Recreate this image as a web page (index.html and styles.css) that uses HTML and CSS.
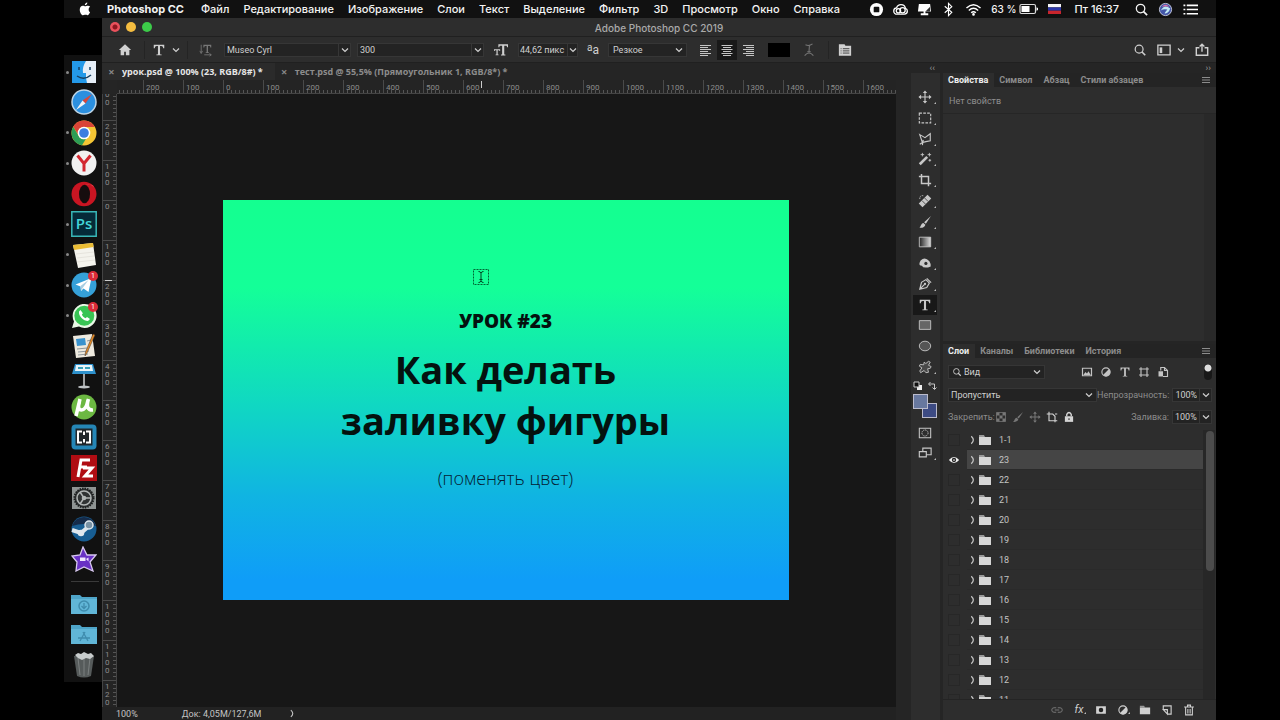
FILE: index.html
```
<!DOCTYPE html>
<html lang="ru">
<head>
    <meta charset="UTF-8">
    <meta name="viewport" content="width=device-width, initial-scale=1.0">
    <title>Adobe Photoshop CC 2019</title>
    <link rel="stylesheet" href="styles.css">
</head>
<body>
    <svg class="sprite" aria-hidden="true">
        <symbol id="chevron" viewBox="0 0 8 8"><path d="M1 2.500 4 5.500l3-3" fill="none" stroke="currentColor" stroke-width="1.200"/></symbol>
        <symbol id="arrow" viewBox="0 0 8 12"><path d="M2.500 1.500q5 4.500 0 9" fill="none" stroke="currentColor" stroke-width="1.500"/></symbol>
        <symbol id="folder" viewBox="0 0 14 12"><path d="M1 1h5l1 2H1z" fill="#999"/><path d="M1 3h12v8H1z" fill="currentColor"/></symbol>
        <symbol id="search" viewBox="0 0 16 16"><circle cx="7" cy="7" r="4.500" fill="none" stroke="currentColor" stroke-width="1.400"/><path d="m10 10 4 4" stroke="currentColor" stroke-width="1.800"/></symbol>
        <symbol id="lines" viewBox="0 0 10 8"><path d="M1 1.500h8M1 4h8M1 6.500h8" stroke="currentColor" stroke-width="1.200"/></symbol>
        <symbol id="letter" viewBox="0 0 16 16"><path d="M2 2h12v4h-1.200c-.2-1.800-.8-2.600-2.300-2.600H9.200v8.800c0 .8.5 1 1.800 1v.8H5v-.8c1.300 0 1.800-.2 1.800-1V3.400H5.500C4 3.400 3.400 4.200 3.200 6H2z" fill="currentColor"/></symbol>
        <symbol id="half" viewBox="0 0 16 16"><circle cx="8" cy="8" r="5.500" fill="none" stroke="currentColor" stroke-width="1.500"/><path d="M12 4a5.600 5.600 0 0 1-8 8z" fill="currentColor"/></symbol>
        <symbol id="move" viewBox="0 0 16 16"><path d="M8 2v12M2 8h12" stroke="currentColor" stroke-width="1.300"/><path d="m8 .5 2.500 3h-5zM8 15.500l2.500-3h-5zM.5 8l3-2.500v5zM15.500 8l-3-2.500v5z" fill="currentColor"/></symbol>
        <symbol id="brush" viewBox="0 0 16 16"><path d="M14.800 1.200 9 10 7 8.200zM6.200 9l2.200 2c-.5 2.500-3 4-7 3.500 2-.8 1.800-5 4.800-5.500z" fill="currentColor"/></symbol>
    </svg>

    <header class="menubar">
        <svg class="apple" viewBox="0 0 16 16"><path d="M10.700.5c.1 1.800-1.300 3.200-2.900 3.200C7.600 2.200 9 .7 10.700.5zM13.800 11.800c-.8 1.800-1.800 3.300-3 3.300-.9 0-1.300-.5-2.500-.5s-1.600.5-2.500.5C3.900 15.100 2 11.700 2 8.800c0-2.900 1.700-4.500 3.500-4.500 1.200 0 2 .6 2.800.6.700 0 1.700-.7 3.100-.7 1 0 1.900.5 2.500 1.300-2.500 1.500-2 5.200-.1 6.300z" fill="#fff"/></svg>
        <nav class="menu">
            <a href="#" class="app-name">Photoshop CC</a>
            <a href="#">Файл</a>
            <a href="#">Редактирование</a>
            <a href="#">Изображение</a>
            <a href="#">Слои</a>
            <a href="#">Текст</a>
            <a href="#">Выделение</a>
            <a href="#">Фильтр</a>
            <a href="#">3D</a>
            <a href="#">Просмотр</a>
            <a href="#">Окно</a>
            <a href="#">Справка</a>
        </nav>
        <div class="status-icons">
            <svg viewBox="0 0 16 16"><circle cx="8" cy="8" r="7" fill="#fff"/><rect x="5" y="5" width="6" height="6" rx="1" fill="#111"/></svg>
            <svg viewBox="0 0 16 16" fill="none" stroke="#fff" stroke-width="1.400"><path d="M4.500 13C2 13 .8 11.300.8 9.500.8 7.800 2 6.500 3.800 6.300 4.600 3.800 6.500 2.800 8.500 2.800c2.700 0 4.400 1.700 4.800 4 1.300.4 2 1.500 2 2.900 0 1.800-1.300 3.300-3.200 3.300z"/><circle cx="5.800" cy="9.300" r="2.300"/><circle cx="10.200" cy="8.800" r="2.800"/></svg>
            <svg viewBox="0 0 16 16"><path d="M2 2h12l1 8H9v2h3v2H4v-2h3v-2H1z" fill="#fff"/><path d="m9 10 5-5v5z" fill="#333"/></svg>
            <svg viewBox="0 0 16 16"><path d="m4 4.500 7.500 6.500L8 14.500v-13L11.500 5 4 11.500" fill="none" stroke="#fff" stroke-width="1.200"/></svg>
            <svg class="wide" viewBox="0 0 18 16" fill="none" stroke="#fff" stroke-width="1.500"><path d="M1.500 6.500q7.500-7 15 0M4 9q5-4.500 10 0M6.500 11.500q2.500-2.300 5 0"/><circle cx="9" cy="13.300" r=".7"/></svg>
            <span class="charge">63 %</span>
            <svg class="battery" viewBox="0 0 20 12"><rect x="1" y="1.500" width="15.500" height="9" rx="1.500" fill="none" stroke="#ddd" stroke-width="1.200"/><path d="M2.500 3h8v6h-8zM17.500 4.300l1.500.7v2l-1.500.7z" fill="#fff"/></svg>
            <svg class="flag" viewBox="0 0 13 10"><path d="M0 0h13v3.400H0z" fill="#f5f5f5"/><path d="M0 3.400h13v3.300H0z" fill="#2a35a8"/><path d="M0 6.700h13V10H0z" fill="#c8252c"/></svg>
            <time>Пт 16:37</time>
            <svg class="find" viewBox="0 0 16 16"><use href="#search"/></svg>
            <svg viewBox="0 0 16 16"><circle cx="8" cy="8" r="6.500" fill="#4356a8" stroke="#c5c9dd"/><path d="M3 9q4-7 10-2-2 6-6 5 1-2 3-4-4-1-7 1z" fill="#bfe9f5"/><path d="M4 5q4-4 8 0-4-1-8 0z" fill="#df72a9"/></svg>
            <svg class="wide" viewBox="0 0 18 16"><path d="M5 3.500h12M5 8h12M5 12.500h12M1.500 3.500h2M1.500 8h2M1.500 12.500h2" stroke="#fff" stroke-width="1.800"/></svg>
        </div>
    </header>

    <div class="desktop">
        <ul class="dock">
            <li class="running"><svg viewBox="0 0 26 26"><path d="M1 2h24v22H1z" fill="#e6eef7"/><path d="M1 2h14q-4 6-3 12h3q-.5 5 1 10H1z" fill="#2499e8"/><path d="M6 17q7 5 14-1M8 8v3M19 8v3" fill="none" stroke="#174061" stroke-width="1.500"/></svg></li>
            <li><svg viewBox="0 0 26 26"><circle cx="13" cy="13" r="12" fill="#2b8fdf" stroke="#bed5e6" stroke-width="1.500"/><path d="m21 5-6.500 9.500-3-3z" fill="#d9473a"/><path d="m5 21 6.500-9.500 3 3z" fill="#f0f4f7"/></svg></li>
            <li class="running"><svg viewBox="0 0 26 26"><circle cx="13" cy="13" r="12.500" fill="#f4c534"/><path d="M2.200 6.700A12.500 12.500 0 0 1 23.900 7H13a6 6 0 0 0-5.500 8z" fill="#d94437"/><path d="M2.200 6.700 8 16.500a6 6 0 0 0 7 2.200l-4 6.600A12.500 12.500 0 0 1 2.200 6.700z" fill="#2d9d55"/><circle cx="13" cy="13" r="6.300" fill="#fff"/><circle cx="13" cy="13" r="4.800" fill="#3c7de0"/></svg></li>
            <li class="running"><svg viewBox="0 0 26 26"><circle cx="13" cy="13" r="12.500" fill="#f1f1f1"/><path d="m6.500 5.500 6.500 8v8M19.500 5.500l-6.500 8" fill="none" stroke="#d32730" stroke-width="3"/></svg></li>
            <li><svg viewBox="0 0 26 26"><ellipse cx="13" cy="13" rx="12.500" ry="12.200" fill="#c91522"/><ellipse cx="13.500" cy="13" rx="5.500" ry="9.300" fill="#160d0e"/><path d="M14 3.500q5-2 9 3-1-4-9-3z" fill="#f05458"/></svg></li>
            <li class="running"><svg viewBox="0 0 26 26"><path d="M.8.8h24.400v24.400H.8z" fill="#052a38" stroke="#39b7b7" stroke-width="1.500"/><text x="13" y="18" text-anchor="middle" class="ps-mark">Ps</text></svg></li>
            <li class="running"><svg viewBox="0 0 26 26"><path d="m2 3 20-2 3 22-18 3z" fill="#f4f3ed"/><path d="m2 3 20-2 .6 4L3 8z" fill="#eabc34"/><path d="m5 12 18-2M6 16l17-2M6 20l18-2" stroke="#e6e4dd"/></svg></li>
            <li class="running"><svg viewBox="0 0 26 26"><circle cx="13" cy="13" r="12.500" fill="#35a0d8"/><path d="m4.500 12.500 16-6.500-3 14-5-3.500-2.500 2.500-.5-4.500z" fill="#fff"/><path d="m9.500 14 8-6-5.500 7.500-2 3z" fill="#a9cee2"/></svg><span class="badge">1</span></li>
            <li class="running"><svg viewBox="0 0 26 26"><path d="M1 25l2-6.500A12 12 0 1 1 8 23.500z" fill="#e9f8e6"/><circle cx="13.300" cy="12.700" r="10" fill="#38c454"/><path d="M9.500 7 8 8.500c-.7 4.500 4.500 9.500 9 9.500l2-2-3-2-1.500 1.200c-1.800-.7-3-2-3.600-3.600l1-1.400z" fill="#fff"/></svg><span class="badge">1</span></li>
            <li><svg viewBox="0 0 26 26"><path d="m2 3 19-2 3 22-19 2z" fill="#ede9de"/><path d="m5 6 9-1 1 7-9 1z" fill="#3992cd"/><path d="m6 16 10-1M7 19l11-1M7 22l10-1M16 8l4-1" stroke="#8f979b"/><path d="m24 2-8 18-2 3 .5-4L22 1z" fill="#e48b28" stroke="#3c3026" stroke-width=".5"/></svg></li>
            <li><svg viewBox="0 0 26 26"><path d="M4 1h18l3 10H1z" fill="#2e91cc"/><path d="M5 2h16l1 6H4z" fill="#e9f4f8"/><path d="M7 5h5M14 5h5" stroke="#39a1b9" stroke-width="2"/><path d="M13 11v12" stroke="#d0d3d5" stroke-width="1.500"/><ellipse cx="13" cy="24" rx="6" ry="1.500" fill="#bec2c5"/></svg></li>
            <li><svg viewBox="0 0 26 26"><circle cx="13" cy="13" r="12.500" fill="#6cb842"/><path d="M9 5 5 22M8.500 8q-2.500 8 2 8 4.500 0 6.500-10M17.500 5q-3.500 11.500 4.500 11" fill="none" stroke="#fff" stroke-width="3.500"/></svg></li>
            <li><svg viewBox="0 0 26 26"><rect x=".5" y=".5" width="25" height="25" rx="4" fill="#2586b6"/><path d="M4.500 4.500h17v17h-17z" fill="#20272b"/><path d="M11 7.500H7v11h4M15 7.500h4v11h-4M13 7.500V11M13 15v3.500" fill="none" stroke="#fff" stroke-width="2"/></svg></li>
            <li><svg viewBox="0 0 26 26"><path d="M0 0h26v26H0z" fill="#b00d13"/><path d="M7 22 10 5h9M8 12h8M12 13h9l-7 8h8" fill="none" stroke="#fff" stroke-width="3"/></svg></li>
            <li><svg viewBox="0 0 26 26"><path d="M1 2h24v22H1z" fill="#8f9493"/><circle cx="13" cy="13" r="9.500" fill="#303333" stroke="#1c1e1e" stroke-width="2" stroke-dasharray="1.500 1"/><circle cx="13" cy="13" r="7" fill="none" stroke="#b1b5b4" stroke-width="1.500"/><path d="M13 13h7M13 13 9 7M13 13l-4 6" stroke="#b1b5b4" stroke-width="1.500"/><circle cx="13" cy="13" r="2.300" fill="#b1b5b4"/></svg></li>
            <li><svg viewBox="0 0 26 26"><circle cx="13" cy="13" r="12.500" fill="#175d92"/><path d="M1 10A12.500 12.500 0 0 1 25 10q-12-4-24 0z" fill="#152b49"/><path d="m1 14 9 3 7-6" fill="none" stroke="#dfe7ed" stroke-width="4"/><circle cx="18" cy="9" r="4" fill="#7992a4" stroke="#dfe7ed" stroke-width="1.500"/><circle cx="10" cy="17" r="3.300" fill="#dfe7ed"/></svg></li>
            <li><svg viewBox="0 0 26 26"><path d="m12 1 4 8 9 0-6 7 3 9-9-4-8 4 1-9-5-6 8-1z" fill="#6931c5" stroke="#d7c8ef" stroke-width="1.300"/><path d="M9 11.500h5.500V15H9zM15 13l2.500-1.500v4z" fill="#efe5ff"/></svg></li>
            <li class="separator"></li>
            <li><svg viewBox="0 0 26 26"><path d="M0 4h9l2 2h15v17H0z" fill="#4ea5c9"/><path d="M0 8h26v15H0z" fill="#61b6d7"/><circle cx="13" cy="15" r="5" fill="none" stroke="#3f8cad" stroke-width="1.500"/><path d="M13 12v5M10.500 15l2.500 2.500 2.500-2.500" fill="none" stroke="#3f8cad" stroke-width="1.300"/></svg></li>
            <li><svg viewBox="0 0 26 26"><path d="M0 4h9l2 2h15v17H0z" fill="#4ea5c9"/><path d="M0 8h26v15H0z" fill="#61b6d7"/><path d="m9 20 5-9M17 20l-5-9M7 17h12" stroke="#3f8cad" stroke-width="1.300"/></svg></li>
            <li><svg viewBox="0 0 26 26"><path d="M3 4h20l-3 20q-7 3-14 0z" fill="#565b5b"/><path d="m7 6 2 17M13 6v18M19 6l-2 17" stroke="#7b8080"/><path d="m4 3 3-2 3 1 3-2 4 2 3-1 3 3-4 3-4-1-4 2-4-2z" fill="#c9cdcd"/></svg></li>
        </ul>

        <main class="window">
            <div class="titlebar">
                <div class="lights">
                    <button class="light close" aria-label="Закрыть"></button>
                    <button class="light minimize" aria-label="Свернуть"></button>
                    <button class="light zoom" aria-label="Развернуть"></button>
                </div>
                <h1>Adobe Photoshop CC 2019</h1>
            </div>

            <div class="options">
                <button class="opt home" aria-label="Главная"><svg viewBox="0 0 16 16"><path d="M8 1.500 1 8h2v6h4v-4h2v4h4V8h2z" fill="currentColor"/></svg></button>
                <span class="rule"></span>
                <button class="opt preset" aria-label="Инструмент"><svg viewBox="0 0 16 16"><use href="#letter"/></svg><svg class="chev" viewBox="0 0 8 8"><use href="#chevron"/></svg></button>
                <span class="rule"></span>
                <button class="opt orient dim" aria-label="Ориентация текста"><svg viewBox="0 0 16 16"><path d="M2.500 2v9M1 9l1.500 3L4 9M6 13.500h8M12 12l2 1.500-2 1.500" fill="none" stroke="currentColor"/><path d="M5 2h9v3h-1l-.5-1.500h-2.200v7h1v1H7.700v-1h1v-7H6.500L6 5H5z" fill="currentColor"/></svg></button>
                <div class="combo family">
                    <input type="text" value="Museo Cyrl" aria-label="Гарнитура">
                    <button aria-label="Список гарнитур"><svg class="chev" viewBox="0 0 8 8"><use href="#chevron"/></svg></button>
                </div>
                <div class="combo family">
                    <input type="text" value="300" aria-label="Начертание">
                    <button aria-label="Список начертаний"><svg class="chev" viewBox="0 0 8 8"><use href="#chevron"/></svg></button>
                </div>
                <label class="opt size-mark" for="font-size" aria-label="Кегль"><svg viewBox="0 0 16 16"><path d="M5 1.500h11v3.300h-1l-.6-1.800h-2.700v10h1.300v1.200H8V13h1.300V3H6.600L6 4.800H5z" fill="currentColor"/><path d="M0 7h7v2H6.200L6 8.200H4.200v4.900h1v1H1.800v-1h1V8.200H1L.8 9H0z" fill="currentColor"/></svg></label>
                <div class="combo size">
                    <input type="text" id="font-size" value="44,62 пикс">
                    <button aria-label="Список размеров"><svg class="chev" viewBox="0 0 8 8"><use href="#chevron"/></svg></button>
                </div>
                <label class="opt aa" for="smoothing"><span>a</span>a</label>
                <div class="picker smoothing">
                    <select id="smoothing"><option>Резкое</option></select>
                    <svg class="chev" viewBox="0 0 8 8"><use href="#chevron"/></svg>
                </div>
                <div class="aligns">
                    <button aria-label="По левому краю"><svg viewBox="0 0 12 12"><path d="M0 1.500h11M0 3.500h8M0 5.500h11M0 7.500h8M0 9.500h11M0 11.500h8" stroke="currentColor"/></svg></button>
                    <button class="active" aria-label="По центру"><svg viewBox="0 0 12 12"><path d="M.5 1.500h11M2 3.500h8M.5 5.500h11M2 7.500h8M.5 9.500h11M2 11.500h8" stroke="currentColor"/></svg></button>
                    <button aria-label="По правому краю"><svg viewBox="0 0 12 12"><path d="M1 1.500h11M4 3.500h8M1 5.500h11M4 7.500h8M1 9.500h11M4 11.500h8" stroke="currentColor"/></svg></button>
                </div>
                <button class="text-color" aria-label="Цвет текста"></button>
                <button class="opt warp dim" aria-label="Деформация"><svg viewBox="0 0 16 16"><path d="M4 2q4 2 8-1M8.500 2.500 8 10M6 10h4M3 14.500q5-6 10 0" fill="none" stroke="currentColor" stroke-width="1.200"/></svg></button>
                <span class="rule"></span>
                <button class="opt panel-toggle" aria-label="Панели символов"><svg viewBox="0 0 16 16"><path d="M1 1.500h6.500l1 1.500H15v11.500H1z" fill="currentColor"/><path d="M3 6.500h1M5.500 6.500H13M3 9h1M5.500 9H13M3 11.500h1M5.500 11.500H13" stroke="#333"/></svg></button>
                <div class="options-end">
                    <button class="opt" aria-label="Поиск"><svg viewBox="0 0 16 16"><use href="#search"/></svg></button>
                    <button class="opt workspace" aria-label="Рабочая среда"><svg viewBox="0 0 16 16"><path d="M1 2.500h14v11H1z" fill="none" stroke="currentColor" stroke-width="1.500"/><path d="M3 5h3v6.500H3z" fill="currentColor"/></svg><svg class="chev" viewBox="0 0 8 8"><use href="#chevron"/></svg></button>
                    <button class="opt" aria-label="Поделиться"><svg viewBox="0 0 16 16"><path d="M5 5.500H1.500v8.500h13V5.500H11M8 10V1.500M5.300 4 8 1.500 10.700 4" fill="none" stroke="currentColor" stroke-width="1.600"/></svg></button>
                </div>
            </div>

            <div class="workspace-area">
                <section class="document">
                    <div class="doc-tabs">
                        <div class="doc-tab current"><button aria-label="Закрыть урок.psd">×</button><a href="#">урок.psd @ 100% (23, RGB/8#) *</a></div>
                        <div class="doc-tab"><button aria-label="Закрыть тест.psd">×</button><a href="#">тест.psd @ 55,5% (Прямоугольник 1, RGB/8*) *</a></div>
                    </div>
                    <div class="ruler-x">
                        <span>200</span><span>100</span><span>0</span><span>100</span><span>200</span><span>300</span><span>400</span><span>500</span><span>600</span><span>700</span><span>800</span><span>900</span><span>1000</span><span>1100</span><span>1200</span><span>1300</span><span>1400</span><span>1500</span><span>1600</span>
                        <i class="pointer"></i>
                    </div>
                    <div class="view">
                        <div class="ruler-y">
                            <div class="marks">
                                <span>300</span><span>200</span><span>100</span><span>0</span><span>100</span><span>200</span><span>300</span><span>400</span><span>500</span><span>600</span><span>700</span><span>800</span><span>900</span><span>1000</span><span>1100</span><span>1200</span>
                            </div>
                            <i class="pointer"></i>
                        </div>
                        <div class="pasteboard">
                            <article class="artwork">
                                <p class="lesson">УРОК #23</p>
                                <h2>Как делать<br>заливку фигуры</h2>
                                <p class="note">(поменять цвет)</p>
                                <svg class="cursor" viewBox="0 0 18 18"><path d="M1.500 1.500h15v15h-15z" fill="none" stroke="#063" stroke-dasharray="2 1"/><path d="M6.500 3.500q2 0 2.500 1.500.5-1.500 2.500-1.500M9 4.500v9M6.500 14.500q2 0 2.500-1.500.5 1.500 2.500 1.500M7.500 11.500h3" fill="none" stroke="#042"/></svg>
                            </article>
                        </div>
                    </div>
                    <footer class="doc-status">
                        <span class="scale">100%</span>
                        <span class="doc-size">Док: 4,05M/127,6M</span>
                        <button aria-label="Сведения"><svg viewBox="0 0 8 12"><use href="#arrow"/></svg></button>
                    </footer>
                </section>

                <aside class="toolbox">
                    <button class="collapse" aria-label="Свернуть панель">‹‹</button>
                    <div class="tools-body">
                        <div class="tools">
                            <button class="more" aria-label="Перемещение"><svg viewBox="0 0 16 16"><use href="#move"/></svg></button>
                            <button class="more" aria-label="Прямоугольная область"><svg viewBox="0 0 16 16"><path d="M1.500 2.500h13v11h-13z" fill="none" stroke="currentColor" stroke-width="1.300" stroke-dasharray="3 1.500"/></svg></button>
                            <button class="more" aria-label="Лассо"><svg viewBox="0 0 16 16"><path d="m2 3 6 3.500L14 2v8l-5 1-4 1zM5 12l-3 2M6 9l-1 6" fill="none" stroke="currentColor" stroke-width="1.300"/></svg></button>
                            <button class="more" aria-label="Волшебная палочка"><svg viewBox="0 0 16 16"><path d="m2 14 8.500-8.500" stroke="currentColor" stroke-width="3"/><path d="M5 1v4M3 3h4M13 1v4M11 3h4M13.500 8v3M12 9.500h3" stroke="currentColor"/></svg></button>
                            <button class="more" aria-label="Рамка"><svg viewBox="0 0 16 16"><path d="M4 1v11h11M1 4h11v11" fill="none" stroke="currentColor" stroke-width="1.700"/></svg></button>
                            <button class="more" aria-label="Восстанавливающая кисть"><svg viewBox="0 0 16 16"><path d="m3 13 10-10" stroke="currentColor" stroke-width="6"/><path d="m4.500 7.500 4 4M7.500 4.500l4 4" stroke="#444"/><path d="M6 2q-4-1-4 4" fill="none" stroke="currentColor" stroke-dasharray="1.500 1"/></svg></button>
                            <button class="more" aria-label="Кисть"><svg viewBox="0 0 16 16"><use href="#brush"/></svg></button>
                            <button class="more" aria-label="Градиент"><svg viewBox="0 0 16 16"><defs><linearGradient id="fade"><stop stop-color="#222"/><stop offset="1" stop-color="#ddd"/></linearGradient></defs><path d="M1.500 2.500h13v11h-13z" fill="url(#fade)" stroke="currentColor"/></svg></button>
                            <button class="more" aria-label="Осветлитель"><svg viewBox="0 0 16 16"><path d="M3 5q5-5 10 1 2 3 1.500 6l-3 1q-6 1-7-2-4 0-2.500-4z" fill="currentColor"/><circle cx="9" cy="8.500" r="1.800" fill="#2d2d2d"/></svg></button>
                            <button class="more" aria-label="Перо"><svg viewBox="0 0 16 16"><path d="m2 14 2-8 5-3 4 4-3 5zM2 14l5.500-5.500M10 1.500l5 5" fill="none" stroke="currentColor" stroke-width="1.300"/><circle cx="8" cy="8" r="1.300" fill="currentColor"/></svg></button>
                            <button class="more active" aria-label="Текст"><svg viewBox="0 0 16 16"><use href="#letter"/></svg></button>
                            <button aria-label="Прямоугольник"><svg viewBox="0 0 16 16"><path d="M1.500 3h13v10h-13z" fill="#666" stroke="currentColor"/></svg></button>
                            <button aria-label="Эллипс"><svg viewBox="0 0 16 16"><ellipse cx="8" cy="8" rx="6.500" ry="5.500" fill="#555" stroke="currentColor"/></svg></button>
                            <button class="more" aria-label="Произвольная фигура"><svg viewBox="0 0 16 16"><path d="m9 4 3-2.500 2 1L12 6l3 1.500-1 2-3 .5 1 4-3 .5-2-2.500-4 2.500-1-2L4.500 9 1.500 7l1-2 4 .5L7 2.500z" fill="#484848" stroke="currentColor"/></svg></button>
                        </div>
                        <div class="swatch-actions">
                            <button aria-label="Цвета по умолчанию"><svg viewBox="0 0 10 10"><path d="M4 4h5v5H4z" fill="#eee"/><path d="M1 1h5v5H1z" fill="#111" stroke="#ccc"/></svg></button>
                            <button aria-label="Поменять цвета"><svg viewBox="0 0 10 10"><path d="M2 3h5.500v5M3.500 1 1.500 3l2 2M5.500 6.500l2 2 2-2" fill="none" stroke="currentColor"/></svg></button>
                        </div>
                        <div class="swatches">
                            <button class="swatch back" aria-label="Фоновый цвет"></button>
                            <button class="swatch front" aria-label="Основной цвет"></button>
                        </div>
                        <button class="mode" aria-label="Быстрая маска"><svg viewBox="0 0 16 16"><path d="M1.500 2.500h13v11h-13z" fill="none" stroke="currentColor" stroke-width="1.200"/><circle cx="8" cy="8" r="3.500" fill="none" stroke="currentColor" stroke-dasharray="1.500 .8"/></svg></button>
                        <button class="mode more" aria-label="Режим экрана"><svg viewBox="0 0 16 16"><path d="M5.500 2.500H15v7.500H5.500z" fill="none" stroke="currentColor" stroke-width="1.300"/><path d="M1.500 6.500h8v6h-8z" fill="#2d2d2d" stroke="currentColor" stroke-width="1.300"/></svg></button>
                    </div>
                </aside>

                <aside class="panels">
                    <button class="collapse" aria-label="Свернуть панели">››</button>
                    <section class="panel properties">
                        <nav class="panel-tabs">
                            <a href="#" class="current">Свойства</a>
                            <a href="#">Символ</a>
                            <a href="#">Абзац</a>
                            <a href="#">Стили абзацев</a>
                            <button aria-label="Меню панели"><svg viewBox="0 0 10 8"><use href="#lines"/></svg></button>
                        </nav>
                        <p class="empty">Нет свойств</p>
                        <div class="properties-body"></div>
                    </section>
                    <section class="panel layers">
                        <nav class="panel-tabs">
                            <a href="#" class="current">Слои</a>
                            <a href="#">Каналы</a>
                            <a href="#">Библиотеки</a>
                            <a href="#">История</a>
                            <button aria-label="Меню панели"><svg viewBox="0 0 10 8"><use href="#lines"/></svg></button>
                        </nav>
                        <div class="layer-row filter">
                            <div class="picker kind">
                                <svg class="lens" viewBox="0 0 16 16"><use href="#search"/></svg>
                                <select aria-label="Фильтр слоев"><option>Вид</option></select>
                                <svg class="chev" viewBox="0 0 8 8"><use href="#chevron"/></svg>
                            </div>
                            <div class="filters">
                                <button aria-label="Пиксельные слои"><svg viewBox="0 0 16 16"><path d="M2 3h12v10H2z" fill="none" stroke="currentColor" stroke-width="1.600"/><path d="m3 12 3-4 2 2 2-3 3 5z" fill="currentColor"/></svg></button>
                                <button aria-label="Корректирующие слои"><svg viewBox="0 0 16 16"><use href="#half"/></svg></button>
                                <button aria-label="Текстовые слои"><svg viewBox="0 0 16 16"><use href="#letter"/></svg></button>
                                <button aria-label="Фигуры"><svg viewBox="0 0 16 16"><path d="M4 4h8v8H4zM1.500 4h3M4 1.500v3M14.500 4h-3M12 1.500v3M1.500 12h3M4 14.500v-3M14.500 12h-3M12 14.500v-3" fill="none" stroke="currentColor" stroke-width="1.500"/></svg></button>
                                <button aria-label="Смарт-объекты"><svg viewBox="0 0 16 16"><path d="M5 6V2h5l4 4v8H8M10 2v4h4" fill="none" stroke="currentColor" stroke-width="1.500"/><path d="M2 7h6v7H2z" fill="currentColor"/></svg></button>
                            </div>
                            <input type="checkbox" class="toggle" aria-label="Включить фильтр" checked>
                        </div>
                        <div class="layer-row blend">
                            <div class="picker mode-select">
                                <select aria-label="Режим наложения"><option>Пропустить</option></select>
                                <svg class="chev" viewBox="0 0 8 8"><use href="#chevron"/></svg>
                            </div>
                            <label for="opacity">Непрозрачность:</label>
                            <div class="combo percent">
                                <input type="text" id="opacity" value="100%">
                                <button aria-label="Непрозрачность"><svg class="chev" viewBox="0 0 8 8"><use href="#chevron"/></svg></button>
                            </div>
                        </div>
                        <div class="layer-row locks">
                            <span>Закрепить:</span>
                            <div class="lock-buttons">
                                <button class="dim" aria-label="Прозрачные пиксели"><svg viewBox="0 0 16 16"><path d="M2 2h12v12H2z" fill="none" stroke="currentColor"/><path d="M2 2h4v4H2zM10 2h4v4h-4zM6 6h4v4H6zM2 10h4v4H2zM10 10h4v4h-4z" fill="currentColor"/></svg></button>
                                <button class="dim" aria-label="Пиксели"><svg viewBox="0 0 16 16"><use href="#brush"/></svg></button>
                                <button class="dim" aria-label="Положение"><svg viewBox="0 0 16 16"><use href="#move"/></svg></button>
                                <button aria-label="Монтажные области"><svg viewBox="0 0 16 16"><path d="M4 1v12h11M1 4h8l3 3v8M12 4h3" fill="none" stroke="currentColor" stroke-width="1.500"/></svg></button>
                                <button aria-label="Закрепить все"><svg viewBox="0 0 16 16"><path d="M2.500 7h11v7.500h-11z" fill="currentColor"/><path d="M5 7V4.500q3-5 6 0V7" fill="none" stroke="currentColor" stroke-width="1.800"/><path d="M8 9.500V12" stroke="#333" stroke-width="1.500"/></svg></button>
                            </div>
                            <label for="fill">Заливка:</label>
                            <div class="combo percent">
                                <input type="text" id="fill" value="100%">
                                <button aria-label="Заливка"><svg class="chev" viewBox="0 0 8 8"><use href="#chevron"/></svg></button>
                            </div>
                        </div>
                        <div class="layer-area">
                            <ul class="layer-list">
                                <li><span class="eye"></span><a href="#"><svg class="open" viewBox="0 0 8 12"><use href="#arrow"/></svg><svg class="folder" viewBox="0 0 14 12"><use href="#folder"/></svg>1-1</a></li>
                                <li class="selected"><span class="eye"><svg viewBox="0 0 14 10"><path d="M1 5q6-7 12 0-6 7-12 0z" fill="#eee"/><circle cx="7" cy="5" r="2.500" fill="#222"/><circle cx="7" cy="5" r="1" fill="#eee"/></svg></span><a href="#"><svg class="open" viewBox="0 0 8 12"><use href="#arrow"/></svg><svg class="folder" viewBox="0 0 14 12"><use href="#folder"/></svg>23</a></li>
                                <li><span class="eye"></span><a href="#"><svg class="open" viewBox="0 0 8 12"><use href="#arrow"/></svg><svg class="folder" viewBox="0 0 14 12"><use href="#folder"/></svg>22</a></li>
                                <li><span class="eye"></span><a href="#"><svg class="open" viewBox="0 0 8 12"><use href="#arrow"/></svg><svg class="folder" viewBox="0 0 14 12"><use href="#folder"/></svg>21</a></li>
                                <li><span class="eye"></span><a href="#"><svg class="open" viewBox="0 0 8 12"><use href="#arrow"/></svg><svg class="folder" viewBox="0 0 14 12"><use href="#folder"/></svg>20</a></li>
                                <li><span class="eye"></span><a href="#"><svg class="open" viewBox="0 0 8 12"><use href="#arrow"/></svg><svg class="folder" viewBox="0 0 14 12"><use href="#folder"/></svg>19</a></li>
                                <li><span class="eye"></span><a href="#"><svg class="open" viewBox="0 0 8 12"><use href="#arrow"/></svg><svg class="folder" viewBox="0 0 14 12"><use href="#folder"/></svg>18</a></li>
                                <li><span class="eye"></span><a href="#"><svg class="open" viewBox="0 0 8 12"><use href="#arrow"/></svg><svg class="folder" viewBox="0 0 14 12"><use href="#folder"/></svg>17</a></li>
                                <li><span class="eye"></span><a href="#"><svg class="open" viewBox="0 0 8 12"><use href="#arrow"/></svg><svg class="folder" viewBox="0 0 14 12"><use href="#folder"/></svg>16</a></li>
                                <li><span class="eye"></span><a href="#"><svg class="open" viewBox="0 0 8 12"><use href="#arrow"/></svg><svg class="folder" viewBox="0 0 14 12"><use href="#folder"/></svg>15</a></li>
                                <li><span class="eye"></span><a href="#"><svg class="open" viewBox="0 0 8 12"><use href="#arrow"/></svg><svg class="folder" viewBox="0 0 14 12"><use href="#folder"/></svg>14</a></li>
                                <li><span class="eye"></span><a href="#"><svg class="open" viewBox="0 0 8 12"><use href="#arrow"/></svg><svg class="folder" viewBox="0 0 14 12"><use href="#folder"/></svg>13</a></li>
                                <li><span class="eye"></span><a href="#"><svg class="open" viewBox="0 0 8 12"><use href="#arrow"/></svg><svg class="folder" viewBox="0 0 14 12"><use href="#folder"/></svg>12</a></li>
                                <li><span class="eye"></span><a href="#"><svg class="open" viewBox="0 0 8 12"><use href="#arrow"/></svg><svg class="folder" viewBox="0 0 14 12"><use href="#folder"/></svg>11</a></li>
                            </ul>
                            <div class="scrollbar"><div class="thumb"></div></div>
                        </div>
                        <footer class="layer-actions">
                            <button class="dim" aria-label="Связать слои"><svg viewBox="0 0 16 16"><path d="M7 5H4a3 3 0 0 0 0 6h3M9 5h3a3 3 0 0 1 0 6H9M5 8h6" fill="none" stroke="currentColor" stroke-width="1.300"/></svg></button>
                            <button class="fx more">fx</button>
                            <button aria-label="Добавить маску"><svg viewBox="0 0 16 16"><path d="M1.500 3h13v10h-13z" fill="currentColor"/><circle cx="8" cy="8" r="3" fill="#222"/></svg></button>
                            <button class="more" aria-label="Корректирующий слой"><svg viewBox="0 0 16 16"><use href="#half"/></svg></button>
                            <button aria-label="Создать группу"><svg viewBox="0 0 14 12"><use href="#folder"/></svg></button>
                            <button aria-label="Создать слой"><svg viewBox="0 0 16 16"><path d="M3 7V2.500h10.500v11H9M3 7.500h5.500v6z" fill="none" stroke="currentColor" stroke-width="1.500"/></svg></button>
                            <button aria-label="Удалить слой"><svg viewBox="0 0 16 16"><path d="M1.500 4h13M6 3.500v-2h4v2M3.500 4v10.500h9V4M6.500 6.500v6M9.500 6.500v6" fill="none" stroke="currentColor" stroke-width="1.400"/></svg></button>
                        </footer>
                    </section>
                </aside>
            </div>
        </main>
    </div>
</body>
</html>
```
FILE: styles.css
```
* {
    box-sizing: border-box;
}
body {
    display: flex;
    flex-direction: column;
    height: 100vh;
    margin: 0;
    padding: 0 5%;
    overflow: hidden;
    background: #000;
    color: #c4c4c4;
    font-family: Roboto, "Liberation Sans", sans-serif;
    font-size: 9px;
    line-height: 12px;
}
h1, h2, p, ul {
    margin: 0;
    padding: 0;
}
ul {
    list-style: none;
}
a {
    color: inherit;
    text-decoration: none;
}
svg {
    display: block;
    flex: none;
}
button, input, select {
    margin: 0;
    padding: 0;
    border: 0;
    border-radius: 0;
    background: none;
    color: inherit;
    font: inherit;
}
button {
    display: flex;
    align-items: center;
    justify-content: center;
    flex: none;
}
.sprite {
    position: absolute;
    width: 0;
    height: 0;
}
.dim {
    color: #777;
}
.chev {
    width: 8px;
    height: 8px;
}

/* menu bar */
.menubar {
    display: flex;
    align-items: center;
    flex: none;
    height: 18px;
    padding: 0 17px 0 14px;
    background: #111;
    color: #f4f4f4;
    font-family: Inter, "Liberation Sans", sans-serif;
    font-size: 11px;
    font-weight: 500;
    line-height: 18px;
    white-space: nowrap;
}
.apple {
    width: 14px;
    height: 14px;
    margin-right: 15px;
}
.menu {
    display: flex;
    gap: 14px;
}
.app-name {
    margin-right: 3px;
    font-weight: 700;
}
.status-icons {
    display: flex;
    align-items: center;
    gap: 9px;
    margin-left: auto;
}
.status-icons svg {
    width: 15px;
    height: 15px;
}
.status-icons .wide {
    width: 17px;
}
.status-icons .battery {
    width: 20px;
    height: 12px;
    margin-left: -6px;
}
.status-icons .flag {
    width: 13px;
    height: 10px;
    margin-right: 4px;
}
.charge {
    font-size: 10px;
}
.status-icons .find {
    margin-left: 6px;
}

/* dock */
.desktop {
    display: flex;
    flex: 1;
    min-height: 0;
}
.dock {
    display: flex;
    flex-direction: column;
    justify-content: space-between;
    flex: none;
    width: 38px;
    margin: 37px 0 38px;
    padding: 4px 0 4px 2px;
    background: #111;
}
.dock li {
    display: flex;
    align-items: center;
    gap: 2px;
    position: relative;
    height: 26px;
}
.dock li::before {
    content: "";
    width: 3px;
    height: 3px;
    border-radius: 50%;
}
.dock .running::before {
    background: #888;
}
.dock svg {
    width: 26px;
    height: 26px;
}
.dock .separator {
    height: 10px;
}
.dock .separator::after {
    content: "";
    width: 28px;
    height: 1px;
    background: #3a3a3a;
}
.ps-mark {
    fill: #43d4d8;
    font-family: "Open Sans", sans-serif;
    font-size: 15px;
    font-weight: 600;
}
.badge {
    position: absolute;
    top: -1px;
    right: 4px;
    width: 10px;
    height: 10px;
    border-radius: 50%;
    background: #d92b38;
    color: #fff;
    font-size: 7px;
    line-height: 10px;
    text-align: center;
}

/* application window */
.window {
    display: flex;
    flex-direction: column;
    flex: 1;
    min-width: 0;
    background: #252525;
}
.titlebar {
    display: grid;
    grid-template-columns: 1fr auto 1fr;
    align-items: center;
    flex: none;
    height: 19px;
    padding: 0 8px;
    border-bottom: 1px solid #202020;
    background: #2d2d2d;
}
.titlebar h1 {
    padding-top: 2px;
    color: #aaa;
    font-family: Inter, "Liberation Sans", sans-serif;
    font-size: 10px;
    font-weight: 500;
    line-height: 16px;
}
.lights {
    display: flex;
    gap: 6px;
}
.light {
    width: 10px;
    height: 10px;
    border-radius: 50%;
}
.close {
    background: radial-gradient(circle, #8e1720 0 2px, #e9515c 3px);
}
.minimize {
    background: #f5bd40;
}
.zoom {
    background: #3ccb49;
}

/* options bar */
.options {
    display: flex;
    align-items: center;
    flex: none;
    gap: 6px;
    height: 26px;
    padding: 0 7px 0 10px;
    border-bottom: 1px solid #202020;
    background: #2d2d2d;
}
.rule {
    width: 1px;
    height: 18px;
    background: #242424;
}
.opt {
    display: flex;
    align-items: center;
    justify-content: center;
    gap: 6px;
    height: 20px;
    color: #d0d0d0;
}
.opt svg {
    width: 14px;
    height: 14px;
}
.opt .chev {
    width: 8px;
    height: 8px;
}
.opt.dim {
    color: #777;
}
.home,
.warp {
    width: 26px;
}
.preset {
    width: 30px;
}
.orient {
    width: 24px;
}
.size-mark {
    width: 22px;
}
.aa {
    gap: 0;
    width: 18px;
    font-size: 12px;
}
.aa span {
    padding-bottom: 4px;
    font-size: 10px;
}
.panel-toggle {
    width: 20px;
}
.combo,
.picker {
    display: flex;
    align-items: center;
    flex: none;
    height: 14px;
    border: 1px solid #363636;
    background: #232323;
    color: #d0d0d0;
}
.combo input {
    flex: 1;
    min-width: 0;
    height: 12px;
    padding: 0 2px;
}
.combo button {
    width: 12px;
    height: 12px;
    border-left: 1px solid #363636;
}
.family {
    width: 127px;
}
.size {
    width: 60px;
}
.size input {
    padding: 0 0 0 1px;
}
.size button {
    width: 10px;
}
.picker {
    padding-right: 3px;
}
.picker select {
    flex: 1;
    min-width: 0;
    height: 12px;
    padding-left: 4px;
    appearance: none;
}
.smoothing {
    width: 79px;
}
.aligns {
    display: flex;
    gap: 1px;
    margin-left: 3px;
}
.aligns button {
    width: 20px;
    height: 20px;
}
.aligns svg {
    width: 12px;
    height: 12px;
}
.aligns .active {
    background: #191919;
}
.text-color {
    width: 22px;
    height: 14px;
    margin-left: 4px;
    background: #000;
}
.options-end {
    display: flex;
    gap: 10px;
    margin-left: auto;
}

/* document */
.workspace-area {
    display: flex;
    flex: 1;
    min-height: 0;
}
.document {
    display: flex;
    flex-direction: column;
    flex: 1;
    min-width: 0;
    margin-right: 15px;
}
.doc-tabs {
    display: flex;
    flex: none;
    height: 17px;
    color: #8c8c8c;
    font-family: "Open Sans", sans-serif;
    font-weight: 700;
    line-height: 17px;
    white-space: nowrap;
}
.doc-tab {
    display: flex;
    gap: 6px;
    padding: 0 12px 0 5px;
}
.doc-tab.current {
    background: #2b2b2b;
    color: #e6e6e6;
}
.doc-tab button {
    width: 9px;
    color: #888;
    font-size: 11px;
}
.ruler-x {
    display: flex;
    position: relative;
    flex: none;
    height: 14px;
    margin-left: 15px;
    padding-left: 26px;
    overflow: hidden;
    border-bottom: 1px solid #444;
    background: repeating-linear-gradient(90deg, #555 0 1px, transparent 1px 4px) 2px 100% / 100% 3px no-repeat #242424;
    color: #8c8c8c;
    font-size: 8px;
}
.ruler-x span {
    flex: none;
    width: 40px;
    padding: 2px 0 0 2px;
    border-left: 1px solid #4a4a4a;
}
.pointer {
    position: absolute;
    background: #ccc;
}
.ruler-x .pointer {
    top: 1px;
    left: 364px;
    width: 1px;
    height: 7px;
}
.view {
    display: flex;
    flex: 1;
    min-height: 0;
}
.ruler-y {
    position: relative;
    flex: none;
    width: 15px;
    overflow: hidden;
    border-right: 1px solid #444;
    border-left: 1px solid #444;
    background: repeating-linear-gradient(#555 0 1px, transparent 1px 4px) 100% 2px / 3px 100% no-repeat #242424;
}
/* the scale starts above the visible part of the view */
.marks {
    display: flex;
    flex-direction: column;
    margin-top: -14px;
    color: #8c8c8c;
    font-size: 8px;
    line-height: 8px;
}
.marks span {
    flex: none;
    height: 40px;
    padding: 2px 6px 0 2px;
    border-top: 1px solid #4a4a4a;
    word-break: break-all;
}
.ruler-y .pointer {
    top: 186px;
    left: 2px;
    width: 7px;
    height: 1px;
}
.pasteboard {
    display: flex;
    align-items: center;
    justify-content: center;
    flex: 1;
    min-width: 0;
    padding: 0 2px 2px 0;
    background: #171717;
}
.artwork {
    position: relative;
    flex: none;
    width: 566px;
    height: 400px;
    padding-top: 109px;
    background: linear-gradient(#14ff90, #14ff98 22%, #10d8c2 51%, #10b4e2 74%, #0f9df8 95%);
    color: #04120f;
    font-family: "Open Sans", "Noto Sans", sans-serif;
    text-align: center;
}
.lesson {
    font-size: 19px;
    font-weight: 800;
    line-height: 24px;
}
.artwork h2 {
    margin-top: 11px;
    font-size: 38px;
    font-weight: 700;
    line-height: 51px;
}
.note {
    margin-top: 20px;
    color: #052033;
    font-size: 18px;
    font-weight: 300;
    line-height: 24px;
}
.cursor {
    position: absolute;
    top: 68px;
    left: 249px;
    width: 18px;
    height: 18px;
}
.doc-status {
    display: flex;
    align-items: center;
    flex: none;
    height: 13px;
    padding-left: 14px;
    background: #222;
}
.doc-size {
    margin-left: 44px;
}
.doc-status button {
    margin-left: 28px;
}
.doc-status svg {
    width: 6px;
    height: 9px;
}

/* tools */
.toolbox {
    display: flex;
    flex-direction: column;
    flex: none;
    width: 29px;
    margin-right: 3px;
}
.collapse {
    align-self: flex-end;
    height: 10px;
    padding: 0 5px;
    color: #999;
    font-size: 9px;
}
.tools-body {
    display: flex;
    flex-direction: column;
    align-items: center;
    flex: 1;
    padding: 14px 1px 0 0;
    background: #2d2d2d;
    color: #c8c8c8;
}
.tools {
    display: flex;
    flex-direction: column;
    justify-content: space-between;
    height: 290px;
}
.tools button,
.mode {
    width: 24px;
    height: 20px;
}
.tools svg,
.mode svg {
    width: 14px;
    height: 14px;
}
.tools .active {
    background: #181818;
}
.more {
    position: relative;
}
.more::after {
    content: "";
    position: absolute;
    right: 1px;
    bottom: 3px;
    border: 1px solid;
    border-color: transparent #bbb #bbb transparent;
}
.swatch-actions {
    display: flex;
    gap: 4px;
    margin-top: 4px;
}
.swatch-actions svg {
    width: 10px;
    height: 10px;
}
.swatches {
    position: relative;
    width: 24px;
    height: 24px;
    margin: 3px 0 5px;
}
.swatch {
    position: absolute;
    width: 15px;
    height: 15px;
    border: 1px solid #bbc;
}
.front {
    top: 0;
    left: 0;
    background: #68789f;
}
.back {
    right: 0;
    bottom: 0;
    background: #3d4b84;
}

/* panels */
.panels {
    display: flex;
    flex-direction: column;
    flex: none;
    width: 273px;
}
.panel {
    display: flex;
    flex-direction: column;
    background: #2d2d2d;
}
.properties {
    flex: none;
    height: 268px;
    margin-bottom: 3px;
}
.panel-tabs {
    display: flex;
    flex: none;
    height: 14px;
    padding-right: 5px;
    background: #242424;
    color: #8c8c8c;
    font-weight: 700;
    line-height: 14px;
}
.panel-tabs a {
    padding: 0 6px 0 5px;
}
.panel-tabs .current {
    background: #2d2d2d;
    color: #eee;
}
.panel-tabs button {
    margin-left: auto;
}
.panel-tabs svg {
    width: 10px;
    height: 8px;
}
.empty {
    height: 27px;
    padding-left: 6px;
    border-bottom: 1px solid #262626;
    color: #8f8f8f;
    line-height: 29px;
}
.properties-body {
    flex: 1;
    border-right: 12px solid #292929;
}
.layers {
    flex: 1;
    min-height: 0;
}
.layer-row {
    display: flex;
    align-items: center;
    flex: none;
    padding: 0 4px 0 5px;
}
.filter {
    height: 27px;
}
.blend {
    height: 19px;
}
.kind {
    width: 97px;
}
.kind .lens {
    width: 10px;
    height: 10px;
    margin-left: 3px;
}
.kind select {
    padding-left: 2px;
}
.filters,
.lock-buttons {
    display: flex;
    gap: 7px;
}
.filters {
    margin-left: 36px;
}
.filters svg,
.lock-buttons svg {
    width: 12px;
    height: 12px;
}
.toggle {
    appearance: none;
    width: 8px;
    height: 16px;
    margin-left: auto;
    border-radius: 4px;
    background: radial-gradient(circle at 4px 4px, #ddd 3px, #181818 4px);
}
.mode-select {
    width: 149px;
}
.mode-select select {
    padding-left: 2px;
}
.layer-row label {
    margin-left: auto;
    color: #8c8c8c;
}
.percent {
    width: 40px;
    margin-left: 3px;
}
.locks {
    height: 25px;
    color: #8c8c8c;
}
.lock-buttons {
    gap: 5px;
}
.lock-buttons button:not(.dim) {
    color: #d4d4d4;
}
.layer-area {
    display: flex;
    flex: 1;
    min-height: 0;
    padding: 1px 1px 0 5px;
    overflow: hidden;
}
.layer-list {
    flex: 1;
}
.layer-list li {
    display: flex;
    align-items: center;
    height: 20px;
}
.eye {
    display: flex;
    align-items: center;
    justify-content: center;
    width: 12px;
    height: 12px;
    margin-right: 7px;
    border: 1px solid #272727;
}
.eye svg {
    width: 12px;
    height: 10px;
}
.selected .eye {
    border: 0;
}
.layer-list a {
    display: flex;
    align-items: center;
    flex: 1;
    height: 20px;
    padding-left: 2px;
    border-bottom: 1px solid #2a2a2a;
}
.selected a {
    background: #454545;
}
.open {
    width: 7px;
    height: 10px;
    margin-right: 2px;
}
.folder {
    width: 14px;
    height: 12px;
    margin-right: 7px;
    color: #d6d6d6;
}
.scrollbar {
    width: 12px;
    padding: 1px 1px 1px 3px;
    background: #272727;
}
.thumb {
    width: 8px;
    height: 140px;
    border-radius: 4px;
    background: #4c4c4c;
}
.layer-actions {
    display: flex;
    align-items: center;
    justify-content: flex-end;
    gap: 6px;
    height: 21px;
    padding-right: 19px;
    border-top: 1px solid #242424;
    color: #d0d0d0;
}
.layer-actions button {
    width: 16px;
    height: 14px;
}
.layer-actions svg {
    width: 12px;
    height: 12px;
}
.layer-actions .dim {
    color: #777;
}
.layer-actions .fx {
    font-size: 11px;
    font-style: italic;
}
```
